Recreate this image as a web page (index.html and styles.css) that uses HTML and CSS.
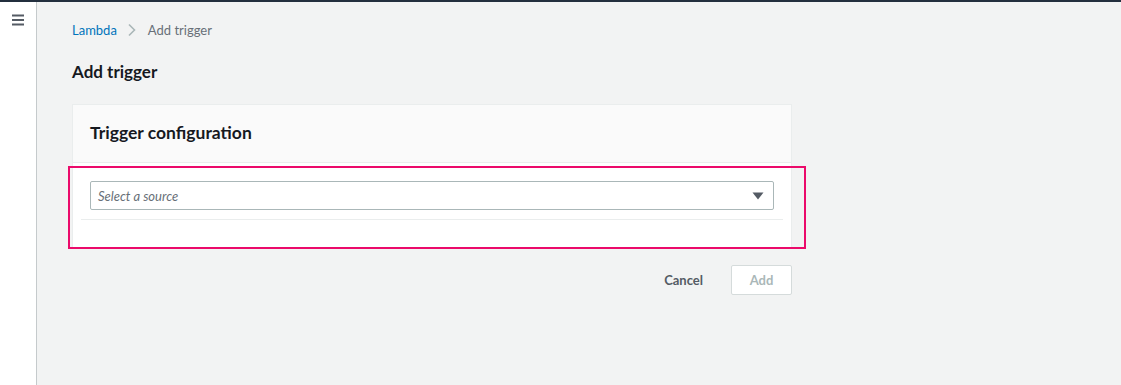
FILE: index.html
```html
<!DOCTYPE html>
<html>
<head>
<meta charset="utf-8">
<link rel="stylesheet" href="styles.css">
</head>
<body>
<div class="topbar"></div>
<div class="layout">
  <aside class="sidebar">
    <svg class="hamburger" width="14" height="12" viewBox="0 0 14 12">
      <rect x="1" y="0.5" width="12" height="2" fill="#545b64"/>
      <rect x="1" y="5" width="12" height="2" fill="#545b64"/>
      <rect x="1" y="9.5" width="12" height="2" fill="#545b64"/>
    </svg>
  </aside>
  <main class="main">
    <nav class="breadcrumb">
      <a class="crumb-link">Lambda</a>
      <svg class="chev" width="10" height="14" viewBox="0 0 10 14"><path d="M2 1.5 L7.5 7 L2 12.5" fill="none" stroke="#aab7b8" stroke-width="1.6"/></svg>
      <span class="crumb-current">Add trigger</span>
    </nav>
    <h1 class="page-title">Add trigger</h1>
    <div class="card-wrap">
      <section class="card">
        <header class="card-header">Trigger configuration</header>
        <div class="card-body">
          <div class="select">
            <span class="placeholder">Select a source</span>
            <svg class="caret" width="12" height="8" viewBox="0 0 12 8"><path d="M0.5 0.5 H11.5 L6 7.5 Z" fill="#545b64"/></svg>
          </div>
          <div class="divider"></div>
        </div>
      </section>
      <div class="highlight"></div>
    </div>
    <div class="actions">
      <button class="btn-link">Cancel</button>
      <button class="btn-add">Add</button>
    </div>
  </main>
</div>
</body>
</html>
```
FILE: styles.css
```css
html, body {
  margin: 0;
  padding: 0;
}
body {
  background: #f2f3f3;
  font-family: Lato, "Open Sans", sans-serif;
  color: #16191f;
  height: 385px;
  overflow: hidden;
}
.topbar {
  height: 2px;
  background: #232f3e;
}
.layout {
  display: flex;
  height: 383px;
}
.sidebar {
  width: 37px;
  box-sizing: border-box;
  background: #ffffff;
  border-right: 1px solid #c5cacc;
  flex: none;
  padding: 12px 0 0 11px;
}
.hamburger {
  display: block;
}
.main {
  padding-left: 35px;
  width: 720px;
}
.breadcrumb {
  display: flex;
  align-items: center;
  height: 20px;
  margin-top: 18px;
  font-size: 13px;
}
.crumb-link {
  color: #0073bb;
}
.chev {
  margin: 0 11px 0 10px;
}
.crumb-current {
  color: #687078;
}
.page-title {
  margin: 21px 0 0 0;
  font-size: 17px;
  font-weight: 700;
  line-height: 22px;
  color: #16191f;
}
.card-wrap {
  position: relative;
  margin-top: 21px;
}
.card {
  border: 1px solid #eaeded;
  border-bottom: none;
  background: #ffffff;
}
.card-header {
  background: #fafafa;
  height: 58px;
  box-sizing: border-box;
  padding: 17px 18px 0 17px;
  font-size: 17.5px;
  font-weight: 700;
  line-height: 22px;
  border-bottom: 1px solid #eaeded;
}
.card-body {
  padding: 18px 8px 0 8px;
  height: 84px;
  box-sizing: border-box;
}
.select {
  margin: 0 9px;
  height: 29px;
  box-sizing: border-box;
  border: 1px solid #aab7b8;
  border-radius: 2px;
  display: flex;
  align-items: center;
  justify-content: space-between;
  padding: 0 9px 0 7px;
  background: #fff;
}
.placeholder {
  font-style: italic;
  font-size: 13px;
  color: #687078;
}
.divider {
  margin-top: 9px;
  height: 1px;
  background: #eaeded;
}
.highlight {
  position: absolute;
  left: -4px;
  top: 62px;
  width: 734px;
  height: 79px;
  border: 2px solid #eb0a6a;
}
.actions {
  display: flex;
  justify-content: flex-end;
  align-items: center;
  margin-top: 18px;
  gap: 28px;
}
.btn-link {
  background: none;
  border: none;
  font-family: inherit;
  font-size: 13px;
  font-weight: 700;
  color: #545b64;
  padding: 0;
}
.btn-add {
  width: 61px;
  height: 30px;
  background: #ffffff;
  border: 1px solid #d5dbdb;
  border-radius: 2px;
  font-family: inherit;
  font-size: 13px;
  font-weight: 700;
  color: #aab7b8;
  padding: 0;
}
```
